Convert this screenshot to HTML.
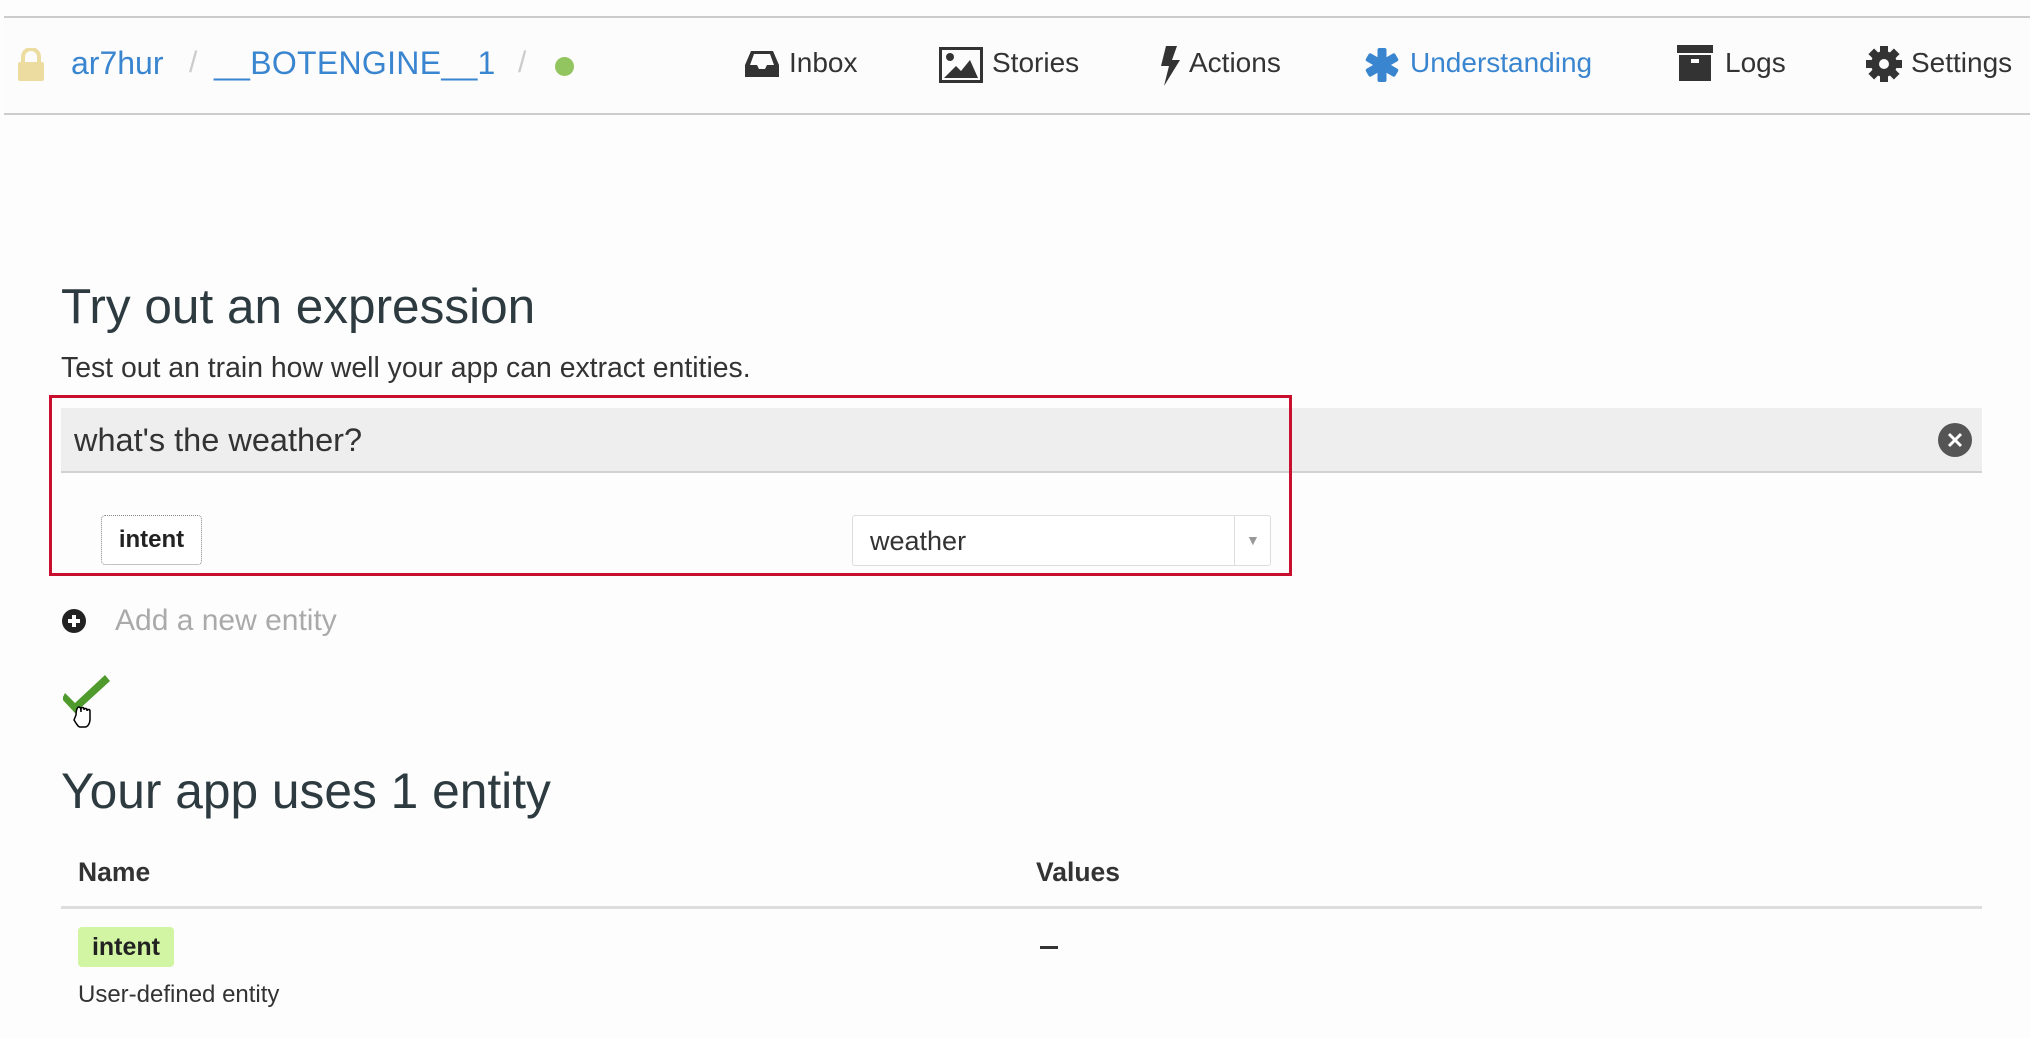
<!DOCTYPE html>
<html><head><meta charset="utf-8"><style>
*{margin:0;padding:0;box-sizing:border-box}
body{width:2030px;height:1038px;background:#fdfdfd;font-family:"Liberation Sans",Arial,sans-serif;color:#333;position:relative;overflow:hidden}
.a{position:absolute;white-space:nowrap}
.nav{position:absolute;left:4px;right:0;top:16px;height:99px;border-top:2px solid #ccc;border-bottom:2px solid #ccc;background:#fcfcfc}
.nt{font-size:28px;top:47px;color:#333}
.blue{color:#3a85cf}
</style></head><body>
<div class="nav"></div>
<svg class="a" style="left:18px;top:48px" width="26" height="33" viewBox="0 0 26 33"><path d="M5 14V9a8 8 0 0116 0v5" fill="none" stroke="#ecdca0" stroke-width="4"/><rect x="0" y="14" width="26" height="19" rx="2" fill="#ecdca0"/></svg>
<div class="a nt blue" style="left:71px;top:45px;font-size:32px">ar7hur</div>
<div class="a nt" style="left:189px;color:#ccc;font-size:30px;top:46px">/</div>
<div class="a nt blue" style="left:214px;top:45px;font-size:32px;letter-spacing:0.3px">__BOTENGINE__1</div>
<div class="a nt" style="left:518px;color:#ccc;font-size:30px;top:46px">/</div>
<div class="a" style="left:555px;top:57px;width:19px;height:19px;border-radius:50%;background:#92c55f"></div>

<svg class="a" style="left:745px;top:49px" width="34" height="30" viewBox="0 0 34 30"><path d="M6 2h22l6 14v12H0V16z" fill="#333"/><path d="M5 16h7l2 4h6l2-4h7L25 5H9z" fill="#fcfcfc"/></svg>
<div class="a nt" style="left:789px">Inbox</div>
<svg class="a" style="left:939px;top:47px" width="44" height="36" viewBox="0 0 44 36"><rect x="1.5" y="1.5" width="41" height="33" fill="none" stroke="#333" stroke-width="3"/><circle cx="11" cy="10" r="4" fill="#333"/><path d="M5 31l12-12 5 5 9-11 8 18z" fill="#333"/></svg>
<div class="a nt" style="left:992px">Stories</div>
<svg class="a" style="left:1159px;top:46px" width="22" height="40" viewBox="0 0 22 40"><path d="M7 0h11l-5 14h8L5 40l5-20H2z" fill="#333"/></svg>
<div class="a nt" style="left:1189px">Actions</div>
<svg class="a" style="left:1364px;top:47px" width="36" height="36" viewBox="-18 -18 36 36"><g fill="#3a85cf"><rect x="-4.5" y="-17" width="9" height="34" rx="2"/><rect x="-4.5" y="-17" width="9" height="34" rx="2" transform="rotate(60)"/><rect x="-4.5" y="-17" width="9" height="34" rx="2" transform="rotate(-60)"/></g></svg>
<div class="a nt blue" style="left:1410px">Understanding</div>
<svg class="a" style="left:1677px;top:45px" width="36" height="36" viewBox="0 0 36 36"><rect x="0" y="0" width="36" height="8" fill="#333"/><rect x="2" y="10" width="32" height="26" fill="#333"/><rect x="14" y="14" width="8" height="4" fill="#fcfcfc"/></svg>
<div class="a nt" style="left:1725px">Logs</div>
<svg class="a" style="left:1866px;top:46px" width="36" height="36" viewBox="-18 -18 36 36"><g fill="#333"><circle r="13"/><rect x="-4" y="-18" width="8" height="36"/><rect x="-4" y="-18" width="8" height="36" transform="rotate(45)"/><rect x="-4" y="-18" width="8" height="36" transform="rotate(90)"/><rect x="-4" y="-18" width="8" height="36" transform="rotate(135)"/></g><circle r="5" fill="#fcfcfc"/></svg>
<div class="a nt" style="left:1911px">Settings</div>

<div class="a" style="left:61px;top:278px;font-size:49.5px;color:#2d3b40">Try out an expression</div>
<div class="a" style="left:61px;top:352px;font-size:28.4px;color:#333">Test out an train how well your app can extract entities.</div>

<div class="a" style="left:61px;top:408px;width:1921px;height:65px;background:#eee;border-bottom:2px solid #d2d2d2"></div>
<div class="a" style="left:74px;top:422px;font-size:32.5px;color:#333">what's the weather?</div>
<svg class="a" style="left:1938px;top:423px" width="34" height="34" viewBox="0 0 34 34"><circle cx="17" cy="17" r="17" fill="#555"/><path d="M11 11l12 12M23 11L11 23" stroke="#fff" stroke-width="3"/></svg>

<div class="a" style="left:49px;top:395px;width:1243px;height:181px;border:3px solid #c8102e"></div>
<div class="a" style="left:101px;top:515px;width:101px;height:50px;border:1px dotted #888;border-radius:4px;background:#fff;font-size:24px;font-weight:bold;text-align:center;line-height:48px;color:#222">intent</div>
<div class="a" style="left:852px;top:515px;width:419px;height:51px;border:1px solid #ddd;border-radius:3px;background:#fff"></div>
<div class="a" style="left:1234px;top:516px;width:1px;height:49px;background:#ddd"></div>
<div class="a" style="left:870px;top:526px;font-size:27px;color:#333">weather</div>
<div class="a" style="left:1246px;top:532px;font-size:14px;color:#999">▼</div>

<svg class="a" style="left:62px;top:609px" width="24" height="24" viewBox="0 0 24 24"><circle cx="12" cy="12" r="12" fill="#222"/><path d="M12 6v12M6 12h12" stroke="#fff" stroke-width="4"/></svg>
<div class="a" style="left:115px;top:604px;font-size:30px;color:#aaa">Add a new entity</div>

<svg class="a" style="left:63px;top:673px" width="48" height="60" viewBox="0 0 48 60"><path d="M2 20l10 10L42 2l5 6L12 40 -1 26z" fill="#4e9a2c"/><path d="M13 42c0-4 1-8 3-8s2 3 2 5v-3c0-2 3-2 3 0v1c0-2 3-2 3 0v1c0-2 3-2 3 0v8c0 4-2 8-5 8h-5c-2 0-4-4-6-7z" fill="#fff" stroke="#000" stroke-width="1.5"/></svg>

<div class="a" style="left:61px;top:762px;font-size:49.7px;color:#2d3b40">Your app uses 1 entity</div>
<div class="a" style="left:78px;top:857px;font-size:26.5px;font-weight:bold;color:#333">Name</div>
<div class="a" style="left:1036px;top:857px;font-size:26.5px;font-weight:bold;color:#333">Values</div>
<div class="a" style="left:61px;top:906px;width:1921px;height:3px;background:#ddd"></div>
<div class="a" style="left:78px;top:927px;width:96px;height:40px;background:#d2f5a3;border-radius:4px;font-size:25px;font-weight:bold;text-align:center;line-height:40px;color:#222">intent</div>
<div class="a" style="left:1040px;top:946px;width:18px;height:3px;background:#333"></div>
<div class="a" style="left:78px;top:981px;font-size:24px;color:#333">User-defined entity</div>
</body></html>
